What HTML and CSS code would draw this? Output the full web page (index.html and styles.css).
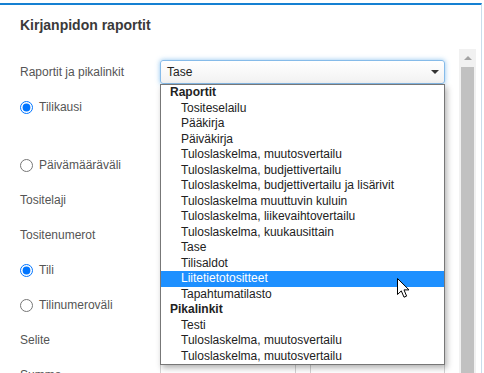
FILE: index.html
```html
<!DOCTYPE html>
<html lang="fi">
<head>
<meta charset="utf-8">
<title>Kirjanpidon raportit</title>
<link rel="stylesheet" href="styles.css">
</head>
<body>
<div class="panel">
  <h1 class="title">Kirjanpidon raportit</h1>
  <div class="body">
    <div class="form">
      <div class="row">
        <span class="lbl">Raportit ja pikalinkit</span>
        <div class="field">
          <div class="select">Tase<span class="caret"></span></div>
          <ul class="popup">
            <li class="grp">Raportit</li>
            <li>Tositeselailu</li>
            <li>Pääkirja</li>
            <li>Päiväkirja</li>
            <li>Tuloslaskelma, muutosvertailu</li>
            <li>Tuloslaskelma, budjettivertailu</li>
            <li>Tuloslaskelma, budjettivertailu ja lisärivit</li>
            <li>Tuloslaskelma muuttuvin kuluin</li>
            <li>Tuloslaskelma, liikevaihtovertailu</li>
            <li>Tuloslaskelma, kuukausittain</li>
            <li>Tase</li>
            <li>Tilisaldot</li>
            <li class="hl">Liitetietotositteet</li>
            <li>Tapahtumatilasto</li>
            <li class="grp">Pikalinkit</li>
            <li>Testi</li>
            <li>Tuloslaskelma, muutosvertailu</li>
            <li>Tuloslaskelma, muutosvertailu</li>
          </ul>
          <svg class="cursor" width="14" height="21" viewBox="0 0 14 21"><path d="M0.5 0.5 L0.5 16.5 L4.3 12.9 L7 19.2 L9.6 18.1 L7 11.9 L12 11.9 Z" fill="#fff" stroke="#000" stroke-width="1" stroke-linejoin="miter"/></svg>
        </div>
      </div>
      <div class="row gapbelow">
        <label class="radio"><input type="radio" name="period" checked>Tilikausi</label>
      </div>
      <div class="row">
        <label class="radio"><input type="radio" name="period">Päivämääräväli</label>
      </div>
      <div class="row">
        <span class="lbl">Tositelaji</span>
        <div class="field"><div class="input"></div></div>
      </div>
      <div class="row">
        <span class="lbl">Tositenumerot</span>
        <div class="field pair"><div class="input"></div><div class="input"></div></div>
      </div>
      <div class="row">
        <label class="radio"><input type="radio" name="acc" checked>Tili</label>
      </div>
      <div class="row">
        <label class="radio"><input type="radio" name="acc">Tilinumeroväli</label>
      </div>
      <div class="row">
        <span class="lbl">Selite</span>
        <div class="field"><div class="input"></div></div>
      </div>
      <div class="row">
        <span class="lbl">Summa</span>
        <div class="field pair"><div class="input"></div><div class="input"></div></div>
      </div>
    </div>
    <div class="sbar">
      <div class="sbtn"><span class="sarrow"></span></div>
      <div class="thumb"></div>
    </div>
  </div>
</div>
</body>
</html>
```

FILE: styles.css
```css
* { box-sizing: border-box; }
html, body { margin: 0; padding: 0; background: #fff; }
body {
  font-family: "Liberation Sans", Arial, sans-serif;
  color: #555;
  width: 484px;
  height: 373px;
  overflow: hidden;
}
.panel {
  margin-top: 3px;
  width: 482px;
  height: 370px;
  border-top: 2px solid #1580d2;
  border-right: 1px solid #c9dcec;
  display: flex;
  flex-direction: column;
}
.title {
  margin: 0;
  height: 44px;
  padding: 10px 0 0 20px;
  font-size: 14px;
  line-height: 20px;
  font-weight: bold;
  color: #3a3a3a;
}
.body {
  flex: 1;
  display: flex;
  padding-right: 5px;
  overflow: hidden;
}
.form {
  flex: 1;
  padding: 11px 14px 0 20px;
  display: flex;
  flex-direction: column;
  gap: 11px;
}
.row {
  height: 24px;
  flex: none;
  display: flex;
  align-items: center;
  font-size: 12px;
}
.row.gapbelow { margin-bottom: 23px; }
.lbl { width: 140px; flex: none; }
.radio {
  display: flex;
  align-items: center;
  gap: 6px;
}
.radio input {
  margin: 0;
  width: 13px;
  height: 13px;
}
.field {
  position: relative;
  width: 285px;
  height: 24px;
  flex: none;
}
.field.pair { display: flex; gap: 14px; }
.field.pair .input { width: 136px; }
.input {
  height: 24px;
  border: 1px solid #d2d2d2;
  background: #fff;
}
.select {
  height: 24px;
  border: 1px solid #86bbe9;
  border-radius: 3px;
  box-shadow: 0 0 5px rgba(102, 175, 233, 0.75);
  background: linear-gradient(#fff, #f2f2f2);
  padding-left: 6px;
  font-size: 12px;
  line-height: 22px;
  color: #222;
  display: flex;
  align-items: center;
  justify-content: space-between;
  padding-right: 5px;
}
.caret {
  width: 0;
  height: 0;
  border-left: 4px solid transparent;
  border-right: 4px solid transparent;
  border-top: 4px solid #333;
}
.popup {
  position: absolute;
  left: 0;
  top: 24px;
  width: 285px;
  height: 281px;
  margin: 0;
  padding: 0;
  list-style: none;
  background: #fff;
  border: 1px solid #777;
  box-shadow: 2px 3px 6px rgba(0, 0, 0, 0.3);
  z-index: 5;
  font-size: 12px;
  color: #222;
}
.popup li {
  height: 15.5px;
  line-height: 15.5px;
  padding-left: 20px;
  white-space: nowrap;
}
.popup li.grp { padding-left: 9px; font-weight: bold; }
.popup li.hl { background: #1e90ff; color: #fff; }
.cursor {
  position: absolute;
  left: 237px;
  top: 218px;
  z-index: 6;
}
.sbar {
  width: 17px;
  flex: none;
  background: #f1f1f1;
  display: flex;
  flex-direction: column;
}
.sbtn {
  height: 17px;
  display: flex;
  align-items: center;
  justify-content: center;
}
.sarrow {
  width: 0;
  height: 0;
  border-left: 4px solid transparent;
  border-right: 4px solid transparent;
  border-bottom: 4px solid #a3a3a3;
}
.thumb {
  flex: 1;
  margin: 1px 2px 0 2px;
  background: #c1c1c1;
}
```
